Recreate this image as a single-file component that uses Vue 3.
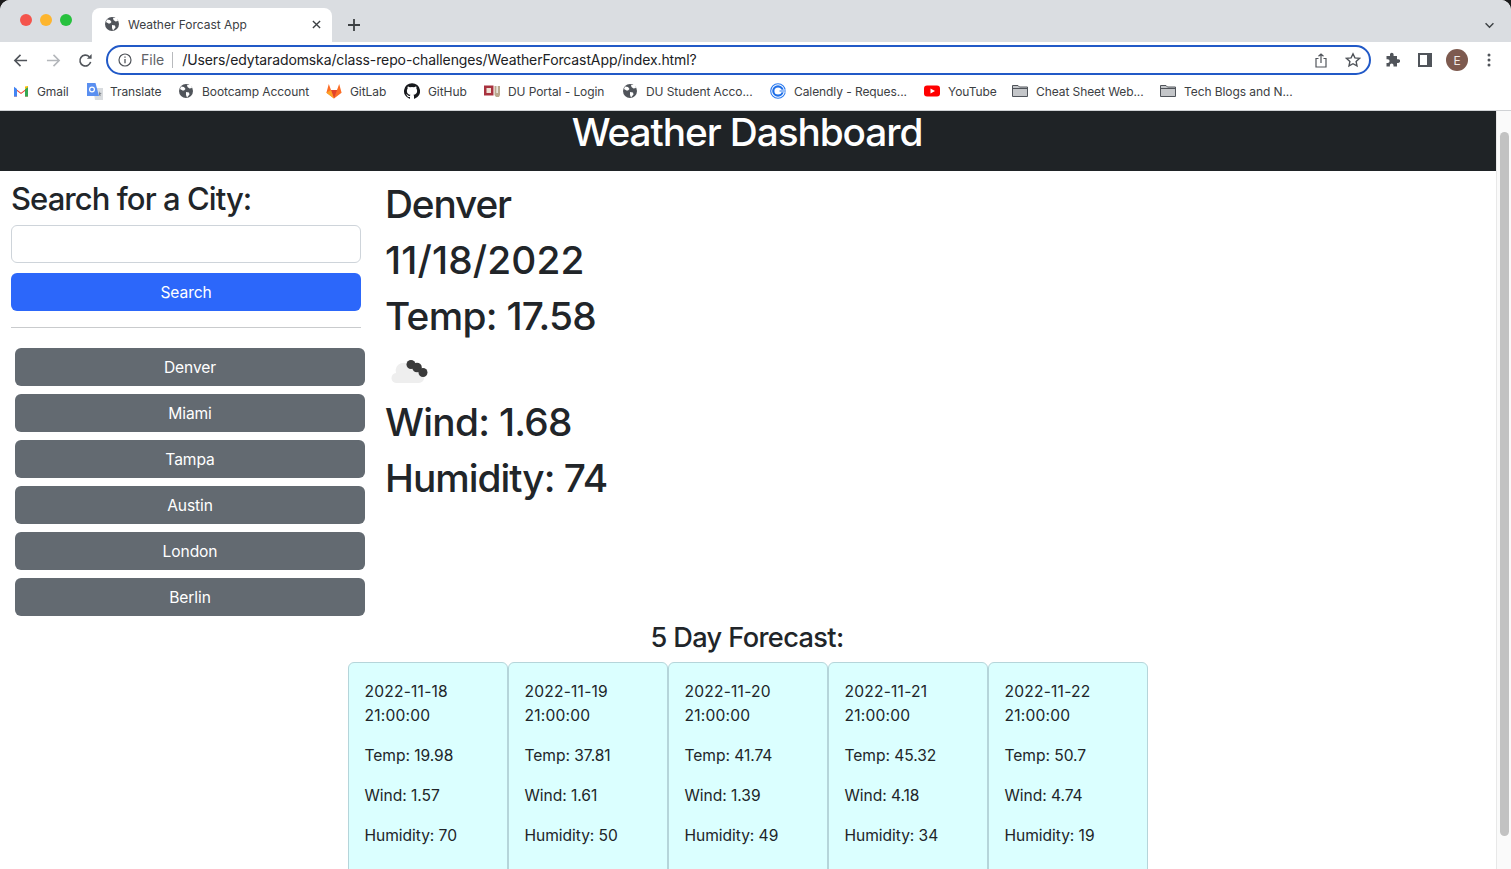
<script setup>
const bookmarks = [
  { icon: 'gmail', label: 'Gmail', width: 73 },
  { icon: 'translate', label: 'Translate', width: 92 },
  { icon: 'globe', label: 'Bootcamp Account', width: 148 },
  { icon: 'gitlab', label: 'GitLab', width: 78 },
  { icon: 'github', label: 'GitHub', width: 80 },
  { icon: 'du', label: 'DU Portal - Login', width: 138 },
  { icon: 'globe', label: 'DU Student Acco...', width: 148 },
  { icon: 'calendly', label: 'Calendly - Reques...', width: 154 },
  { icon: 'youtube', label: 'YouTube', width: 88 },
  { icon: 'folder', label: 'Cheat Sheet Web...', width: 148 },
  { icon: 'folder', label: 'Tech Blogs and N...', width: 148 }
]
const cities = ['Denver', 'Miami', 'Tampa', 'Austin', 'London', 'Berlin']
const forecast = [
  { date: '2022-11-18 21:00:00', temp: '19.98', wind: '1.57', humidity: '70' },
  { date: '2022-11-19 21:00:00', temp: '37.81', wind: '1.61', humidity: '50' },
  { date: '2022-11-20 21:00:00', temp: '41.74', wind: '1.39', humidity: '49' },
  { date: '2022-11-21 21:00:00', temp: '45.32', wind: '4.18', humidity: '34' },
  { date: '2022-11-22 21:00:00', temp: '50.7', wind: '4.74', humidity: '19' }
]
</script>

<template>
  <div class="window">
    <header class="chrome">
      <div class="tabstrip">
        <div class="lights"><i class="red"></i><i class="amber"></i><i class="green"></i></div>
        <div class="tab">
          <svg class="ico16" viewBox="0 0 16 16"><circle cx="8" cy="8" r="7" fill="#50545a"/><path d="M3 3.500l3 .5 1.500 2L6 7.500 4.500 7.500 2 6zM8 9l3 .5.5 2-2.500 3L8 12zM9 2h4l1 3-2.500.5L9.500 4z" fill="#fff"/></svg>
          <span class="tabtitle">Weather Forcast App</span>
          <svg class="tabx" viewBox="0 0 10 10"><path d="M1 1l8 8M9 1l-8 8" stroke="#3c4043" stroke-width="1.500"/></svg>
        </div>
        <svg class="plus" viewBox="0 0 12 12"><path d="M6 0v12M0 6h12" stroke="#3c4043" stroke-width="1.800"/></svg>
        <svg class="chev" viewBox="0 0 12 8"><path d="M1.500 1.500L6 6l4.500-4.500" fill="none" stroke="#3c4043" stroke-width="1.600"/></svg>
      </div>
      <div class="toolbar">
        <svg class="nav" viewBox="0 0 16 16"><path d="M15 8H2M8 2L2 8l6 6" fill="none" stroke="#50545a" stroke-width="1.700"/></svg>
        <svg class="nav" viewBox="0 0 16 16"><path d="M1 8h13M8 2l6 6-6 6" fill="none" stroke="#b4b7bb" stroke-width="1.700"/></svg>
        <svg class="nav reload" viewBox="0 0 16 16"><path d="M13.500 9.500A5.800 5.800 0 1 1 12 4" fill="none" stroke="#50545a" stroke-width="1.700"/><path d="M14.500 1v5h-5z" fill="#50545a"/></svg>
        <div class="omnibox">
          <svg class="info" viewBox="0 0 14 14"><circle cx="7" cy="7" r="6" fill="none" stroke="#50545a" stroke-width="1.200"/><path d="M7 6v4.200M7 3.400v1.300" stroke="#50545a" stroke-width="1.300"/></svg>
          <span class="file">File</span>
          <span class="sep"></span>
          <span class="url">/Users/edytaradomska/class-repo-challenges/WeatherForcastApp/index.html?</span>
          <svg class="share" viewBox="0 0 12 15"><path d="M3.500 5.500H1v8.500h10V5.500H8.500M6 10V1M3.500 3.200L6 1l2.500 2.200" fill="none" stroke="#50545a" stroke-width="1.200"/></svg>
          <svg class="star" viewBox="0 0 16 16"><path d="M8 1.800l1.900 4.100 4.500.5-3.300 3 .9 4.500L8 11.700l-4 2.200.9-4.500-3.300-3 4.500-.5z" fill="none" stroke="#50545a" stroke-width="1.400"/></svg>
        </div>
        <svg class="puzzle" viewBox="0 0 16 16"><path d="M6 2.500a1.800 1.800 0 0 1 3.600 0V4H13v3.200h1.200a1.900 1.900 0 0 1 0 3.800H13v3.500H9.500v-1.200a1.800 1.800 0 0 0-3.600 0v1.200H2.500V11h1.200a1.900 1.900 0 0 0 0-3.800H2.500V4H6z" fill="#50545a"/></svg>
        <svg class="panel" viewBox="0 0 14 14"><rect width="14" height="14" fill="#50545a"/><rect x="2" y="2" width="7" height="10" fill="#fff"/></svg>
        <span class="avatar">E</span>
        <svg class="dots" viewBox="0 0 4 14"><circle cx="2" cy="2" r="1.500"/><circle cx="2" cy="7" r="1.500"/><circle cx="2" cy="12" r="1.500"/></svg>
      </div>
      <nav class="bookmarks">
        <span v-for="b in bookmarks" :key="b.label" class="bookmark" :style="{ width: b.width + 'px' }">
          <svg v-if="b.icon === 'gmail'" class="ico16" viewBox="0 0 16 16"><path d="M1 13.500V4.500l7 5.200 7-5.200v9h-3V8L8 11 4 8v5.500z" fill="#ea4335"/><path d="M1 13.500V3.800L4 6v7.500z" fill="#4285f4"/><path d="M12 13.500V6l3-2.200v9.700z" fill="#34a853"/><path d="M12 6.200V3.500l3-.5v1z" fill="#fbbc04"/></svg>
          <svg v-else-if="b.icon === 'translate'" class="ico16 tr" viewBox="0 0 17 17"><path d="M7 5h10v12H9z" fill="#d9dcdf"/><path d="M1 0h8.500l3.500 13H1z" fill="#5a8ff0"/><circle cx="6" cy="6.500" r="2.400" fill="none" stroke="#fff" stroke-width="1.200"/><path d="M13 8l.8 1.800 2 .2-1.500 1.300.4 2-1.700-1z" fill="#80868b"/></svg>
          <svg v-else-if="b.icon === 'globe'" class="ico16" viewBox="0 0 16 16"><circle cx="8" cy="8" r="7" fill="#50545a"/><path d="M3 3.500l3 .5 1.500 2L6 7.500 4.500 7.500 2 6zM8 9l3 .5.5 2-2.500 3L8 12zM9 2h4l1 3-2.500.5L9.500 4z" fill="#fff"/></svg>
          <svg v-else-if="b.icon === 'gitlab'" class="ico16" viewBox="0 0 16 16"><path d="M8 15.500L.4 9.800 2.800 1 5 7h6l2.200-6 2.400 8.800z" fill="#fc6d26"/><path d="M8 15.500L5 7h6z" fill="#e24329"/><path d="M.4 9.800L8 15.500 5 7z" fill="#fca326"/></svg>
          <svg v-else-if="b.icon === 'github'" class="ico16" viewBox="0 0 16 16"><path fill="#17191c" d="M8 .2a8 8 0 0 0-2.500 15.600c.4.1.500-.2.500-.4v-1.400c-2.200.5-2.700-1-2.700-1-.4-.9-.9-1.200-.9-1.200-.7-.5.100-.5.100-.5.800.1 1.200.8 1.200.8.700 1.200 1.900.9 2.300.7.100-.5.300-.9.500-1.100-1.800-.2-3.600-.9-3.600-4 0-.9.300-1.600.8-2.100-.1-.2-.4-1 .1-2.100 0 0 .7-.2 2.200.8a7.600 7.600 0 0 1 4 0c1.500-1 2.200-.8 2.200-.8.500 1.100.2 1.900.1 2.100.5.500.8 1.200.8 2.100 0 3.100-1.900 3.800-3.700 4 .3.300.6.700.6 1.500v2.200c0 .2.100.5.600.4A8 8 0 0 0 8 .2z"/></svg>
          <svg v-else-if="b.icon === 'du'" class="ico16" viewBox="0 0 16 16"><path d="M0 2.500h9.500v10H0z" fill="#a8323e"/><path d="M2.500 5h4.500v5H2.500z" fill="#efe2d6"/><path d="M10.500 3h2v7h1.200V3H16v9l-1 2h-3l-1.500-2z" fill="#b9a88e"/></svg>
          <svg v-else-if="b.icon === 'calendly'" class="ico16" viewBox="0 0 16 16"><circle cx="8" cy="8" r="7.300" fill="none" stroke="#2a7af0" stroke-width="1.100"/><circle cx="8" cy="8" r="4.700" fill="none" stroke="#1f6fe8" stroke-width="2.200"/><path d="M9 6.700h7v2.600H9z" fill="#fff"/><path d="M9.500 8H16" stroke="#2a7af0" stroke-width="1"/></svg>
          <svg v-else-if="b.icon === 'youtube'" class="ico16" viewBox="0 0 16 16"><rect y="2.500" width="16" height="11" rx="3" fill="#f00"/><path d="M6.500 5.500L11 8l-4.500 2.500z" fill="#fff"/></svg>
          <svg v-else class="ico16" viewBox="0 0 16 16"><path d="M.5 13.500v-11h5.500l1.500 1.500h8v9.500z" fill="#c4c6c9" stroke="#50545a"/><path d="M.5 5.500h15" stroke="#50545a"/></svg>
          <span>{{ b.label }}</span>
        </span>
      </nav>
    </header>

    <div class="viewport">
      <main class="page">
        <div class="banner"><h1>Weather Dashboard</h1></div>
        <div class="columns">
          <aside class="sidebar">
            <h3>Search for a City:</h3>
            <input class="city-input" type="text" />
            <button class="search-btn" type="button">Search</button>
            <hr />
            <div class="cities">
              <button v-for="c in cities" :key="c" class="city-btn" type="button">{{ c }}</button>
            </div>
          </aside>
          <section class="current">
            <h2>Denver</h2>
            <h2 class="date">11/18/2022</h2>
            <h2 class="reading">Temp: 17.58</h2>
            <svg class="weather" viewBox="0 0 50 50">
              <path d="M12 35a5 5 0 0 1-1-10 8 8 0 0 1 15-5.500 6 6 0 0 1 8 5.500 5 5 0 0 1 0 10z" fill="#eeeeee"/>
              <circle cx="26" cy="16.500" r="4.500" fill="#3a3a3a"/><circle cx="32" cy="19.500" r="4.800" fill="#3a3a3a"/><circle cx="38" cy="24.500" r="4.500" fill="#3a3a3a"/>
            </svg>
            <h2 class="reading">Wind: 1.68</h2>
            <h2 class="humidity">Humidity: 74</h2>
          </section>
        </div>
        <h3 class="forecast-title">5 Day Forecast:</h3>
        <div class="forecast">
          <article v-for="d in forecast" :key="d.date" class="day">
            <p class="stamp">{{ d.date }}</p>
            <p>Temp: {{ d.temp }}</p>
            <p>Wind: {{ d.wind }}</p>
            <p>Humidity: {{ d.humidity }}</p>
          </article>
        </div>
      </main>
      <div class="scrollbar"><div class="thumb"></div></div>
    </div>
  </div>
</template>

<style>
html, body { margin: 0; height: 100%; overflow: hidden; background: #1b1b1b; }
</style>

<style scoped>
.window { height: 869px; display: flex; flex-direction: column; overflow: hidden; font-family: Inter, "Liberation Sans", sans-serif; color: #212529; }
.chrome { flex: none; height: 111px; box-sizing: border-box; background: #fff; border-bottom: 1px solid #d0d2d5; border-radius: 10px 10px 0 0; overflow: hidden; font-size: 12px; color: #3c4043; position: relative; z-index: 1; }
.tabstrip { height: 42px; background: #dadde1; display: flex; align-items: flex-end; position: relative; }
.lights { display: flex; gap: 8px; padding: 0 0 2px 20px; width: 72px; height: 42px; box-sizing: border-box; align-items: center; }
.lights i { width: 12px; height: 12px; border-radius: 50%; }
.red { background: #f4544c; }
.amber { background: #fdb52e; }
.green { background: #27c13e; }
.tab { width: 240px; height: 34px; margin-left: 20px; background: #fff; border-radius: 8px 8px 0 0; display: flex; align-items: center; padding: 0 11px 2px 12px; box-sizing: border-box; }
.tabtitle { flex: 1; margin-left: 8px; white-space: nowrap; font-size: 12px; letter-spacing: -0.03px; }
.tabx { width: 9px; height: 9px; }
.plus { width: 12px; height: 12px; margin: 0 0 11px 16px; }
.chev { position: absolute; right: 16px; top: 22px; width: 11px; height: 7px; }
.ico16 { width: 16px; height: 16px; flex: none; }
.tr { width: 17px; height: 17px; margin-right: -1px; }
.toolbar { height: 36px; display: flex; align-items: center; padding-left: 13px; box-sizing: border-box; }
.nav { width: 15px; height: 15px; margin-right: 17.500px; flex: none; }
.nav.reload { margin-right: 13px; }
.omnibox { width: 1265px; height: 30px; box-sizing: border-box; border: 2px solid #2159c7; border-radius: 15px; display: flex; align-items: center; padding: 0 8px 0 10px; }
.info { width: 14px; height: 14px; flex: none; }
.file { margin-left: 9px; font-size: 14px; line-height: 16px; padding-bottom: 1px; color: #5f6368; }
.sep { width: 1px; height: 16px; background: #b8babd; margin: 0 9px 0 8px; }
.url { flex: 1; font-size: 14px; line-height: 16px; padding-bottom: 1px; color: #202124; white-space: nowrap; letter-spacing: -0.11px; }
.share { width: 12px; height: 15px; margin-right: 18px; }
.star { width: 16px; height: 16px; }
.puzzle { width: 16px; height: 16px; margin-left: 13px; }
.panel { width: 14px; height: 14px; margin-left: 18px; }
.avatar { width: 22px; height: 22px; margin-left: 14px; border-radius: 50%; background: #7d5a4f; color: #f1e9e5; font-size: 12px; display: flex; align-items: center; justify-content: center; }
.dots { width: 4px; height: 14px; margin-left: 19px; fill: #50545a; }
.bookmarks { height: 26px; display: flex; align-items: center; padding-left: 13px; white-space: nowrap; }
.bookmark { display: flex; align-items: center; gap: 8px; flex: none; font-size: 12px; letter-spacing: -0.08px; }
.viewport { flex: 1; display: flex; background: #fff; min-height: 0; }
.page { flex: 1; min-width: 0; }
.banner { height: 60px; background: #1f2326; }
.banner h1 { margin: 0; padding-right: 2px; color: #fff; font-size: 38.800px; font-weight: 500; line-height: 41px; letter-spacing: -1.090px; text-align: center; }
.columns { display: flex; height: 450px; }
.sidebar { width: 350px; padding: 9px 11px 0 11px; flex: none; }
.sidebar h3 { margin: 0 0 7px; font-size: 31px; font-weight: 500; line-height: 38px; letter-spacing: -0.930px; }
.city-input { display: block; width: 100%; height: 38px; box-sizing: border-box; border: 1px solid #ced4da; border-radius: 6px; background: #fff; }
.search-btn { display: block; width: 100%; height: 38px; margin-top: 10px; border: 0; border-radius: 6px; background: #2c67fa; color: #fff; font: 400 15.600px Inter, sans-serif; letter-spacing: -0.1px; }
hr { margin: 16px 0 20px; border: 0; border-top: 1px solid #c9cbcd; }
.cities { display: flex; flex-direction: column; gap: 8px; margin-left: 4px; width: 350px; }
.city-btn { height: 38px; border: 0; border-radius: 6px; background: #636a71; color: #fff; font: 400 15.600px Inter, sans-serif; letter-spacing: -0.1px; }
.current { margin-left: 13px; padding-top: 9px; }
.current h2 { margin: 0 0 8px; font-size: 38.800px; font-weight: 500; line-height: 48px; letter-spacing: -1.150px; white-space: nowrap; }
.current h2.date { letter-spacing: 0.150px; }
.current h2.reading { letter-spacing: -0.700px; }
.current h2.humidity { letter-spacing: -0.980px; }
.weather { display: block; width: 50px; height: 50px; }
.forecast-title { margin: 0; padding-right: 2px; font-size: 27.200px; font-weight: 500; line-height: 34px; letter-spacing: -0.630px; text-align: center; }
.forecast { display: flex; justify-content: center; margin-top: 7px; }
.day { width: 160px; height: 260px; box-sizing: border-box; padding: 17px 15.500px 16px; background: #dbffff; border: 1px solid #b5d5da; border-radius: 6px; }
.day p { margin: 0 0 16px; font-size: 15.600px; line-height: 24px; letter-spacing: -0.05px; }
.day p.stamp { letter-spacing: 0.200px; }
.scrollbar { flex: none; width: 15px; background: #fafafa; border-left: 1px solid #e8e8e8; box-sizing: border-box; padding: 21px 2px 0 3px; }
.thumb { height: 704px; border-radius: 5px; background: #c2c2c2; }
</style>
